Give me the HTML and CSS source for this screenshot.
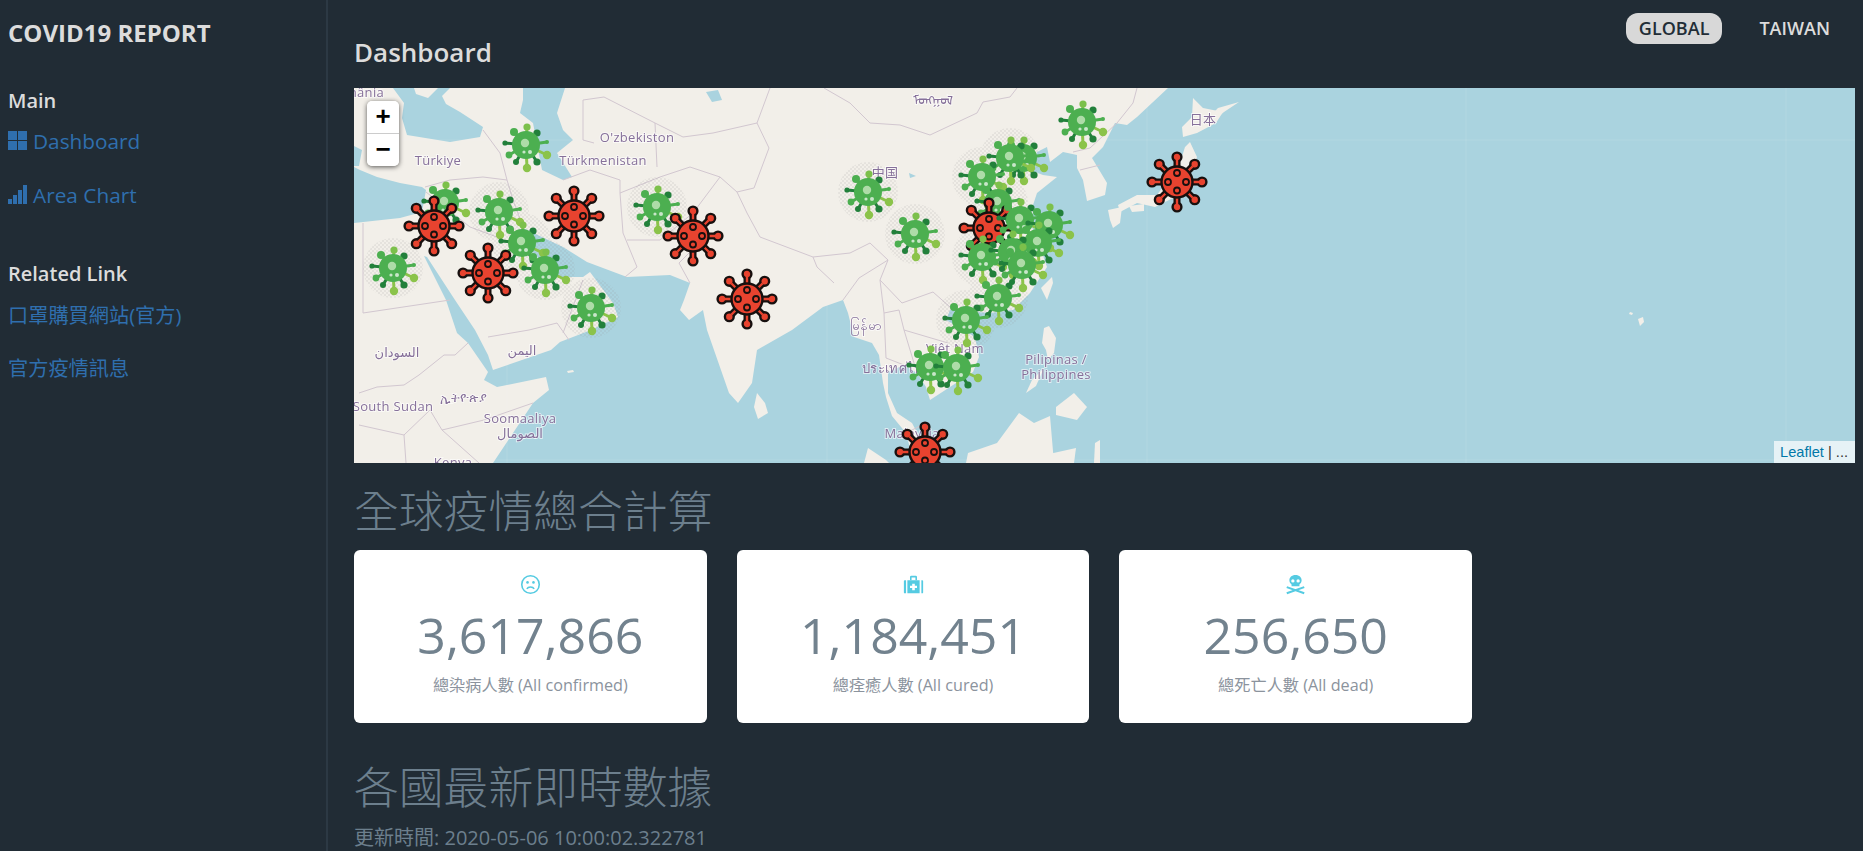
FILE: index.html
```html
<!DOCTYPE html>
<html>

<head>
    <meta charset="UTF-8">
    <title>COVID19 REPORT</title>
    <link rel="stylesheet" href="styles.css">
</head>

<body>
    <aside class="sidebar">
        <h1 class="brand">COVID19 REPORT</h1>
        <h2 class="side-title side-main">Main</h2>
        <a class="side-link side-link-icon" href="#">
            <svg class="side-icon" viewBox="0 0 19 19"><path d="M0 0h9v9H0zM10 0h9v9h-9zM0 10h9v9H0zM10 10h9v9h-9z"/></svg>
            Dashboard
        </a>
        <a class="side-link side-link-icon" href="#">
            <svg class="side-icon" viewBox="0 0 19 19"><path d="M0 14h4v5H0zM5 10h4v9H5zM10 5h4v14h-4zM15 0h4v19h-4z"/></svg>
            Area Chart
        </a>
        <h2 class="side-title side-related">Related Link</h2>
        <a class="side-link" href="#">口罩購買網站(官方)</a>
        <a class="side-link side-link-last" href="#">官方疫情訊息</a>
    </aside>

    <main class="content">
        <div class="topbar">
            <h2 class="page-title">Dashboard</h2>
            <div class="tabs">
                <a class="tab tab-active" href="#">GLOBAL</a>
                <a class="tab" href="#">TAIWAN</a>
            </div>
        </div>

        <div class="map">
            <svg class="map-svg" viewBox="0 0 1501 375">
                <defs>
                    <pattern id="dither" width="4" height="4" patternUnits="userSpaceOnUse">
                        <path d="M0 0h2v2H0zM2 2h2v2H2z" fill="#9a9a9a"/>
                    </pattern>
                    <g id="virus-green">
                        <g stroke-width="3">
                            <path d="M0 0L1-18" stroke="#7cc04b"/>
                            <path d="M0 0L11-12" stroke="#22803b"/>
                            <path d="M0 0L21-3" stroke="#4caf50"/>
                            <path d="M0 0L21 10" stroke="#8bc34a"/>
                            <path d="M0 0L1 23" stroke="#8bc34a"/>
                            <path d="M0 0L11 17" stroke="#22803b"/>
                            <path d="M0 0L-10 17" stroke="#22803b"/>
                            <path d="M0 0L-17 10" stroke="#4caf50"/>
                            <path d="M0 0L-21-2" stroke="#22803b"/>
                            <path d="M0 0L-12-13" stroke="#4caf50"/>
                        </g>
                        <circle cx="1" cy="-18" r="3.6" fill="#7cc04b"/>
                        <circle cx="11" cy="-12" r="3.6" fill="#22803b"/>
                        <circle cx="21" cy="-3" r="2" fill="#4caf50"/>
                        <circle cx="21" cy="10" r="4.2" fill="#8bc34a"/>
                        <circle cx="1" cy="23" r="4.2" fill="#8bc34a"/>
                        <circle cx="11" cy="17" r="3.6" fill="#22803b"/>
                        <circle cx="-10" cy="17" r="3" fill="#22803b"/>
                        <circle cx="-17" cy="10" r="3.4" fill="#4caf50"/>
                        <circle cx="-21" cy="-2" r="2.6" fill="#22803b"/>
                        <circle cx="-12" cy="-13" r="4" fill="#4caf50"/>
                        <circle r="14" fill="#4caf50"/>
                        <circle cx="-1" cy="-2" r="4.2" fill="#aedca8"/>
                        <circle cx="4" cy="7" r="2" fill="#c8e6c9"/>
                        <circle cx="-2" cy="7" r="1.6" fill="#c8e6c9"/>
                    </g>
                    <g id="virus-red">
                        <path d="M0-25V25M-25 0H25M-17.7-17.7L17.7 17.7M-17.7 17.7L17.7-17.7" stroke="#17100f" stroke-width="7"/>
                        <g fill="#e8432f" stroke="#17100f" stroke-width="2.4">
                            <circle cy="-25" r="4.4"/>
                            <circle cy="25" r="4.4"/>
                            <circle cx="-25" r="4.4"/>
                            <circle cx="25" r="4.4"/>
                            <circle cx="-17.7" cy="-17.7" r="4.4"/>
                            <circle cx="17.7" cy="-17.7" r="4.4"/>
                            <circle cx="-17.7" cy="17.7" r="4.4"/>
                            <circle cx="17.7" cy="17.7" r="4.4"/>
                        </g>
                        <path d="M0-22V22M-22 0H22M-15.5-15.5L15.5 15.5M-15.5 15.5L15.5-15.5" stroke="#e8432f" stroke-width="2.4"/>
                        <circle r="15.5" fill="#e8432f" stroke="#17100f" stroke-width="2.4"/>
                        <g fill="none" stroke="#17100f" stroke-width="1.8">
                            <circle cy="-9" r="3"/>
                            <circle cy="8.5" r="3"/>
                            <circle cx="-9" r="3"/>
                            <circle cx="9" r="3"/>
                        </g>
                    </g>
                </defs>

                <g class="tiles">
                    <rect width="1501" height="375" fill="#aad3df"/>
                    <!-- land -->
                    <g fill="#f2efe9">
                        <path d="M0 0L814 0L783 29L773 37L761 35L749 59L738 70L753 95L751 107L733 113L729 92L723 80L723 67L709 64L696 74L693 59L683 64L676 82L689 87L703 89L683 105L679 117L678 139L686 159L693 179L676 205L659 222L636 225L596 222L592 232L621 249L625 269L619 284L576 312L572 299L563 285L550 277L534 284L534 305L543 325L558 335L567 352L578 375L560 375L552 345L538 328L532 309L529 295L525 267L518 255L500 249L494 225L489 212L469 219L438 242L403 262L398 295L384 315L375 305L353 242L349 222L335 232L326 222L330 212L336 195L316 187L273 189L233 174L209 159L169 140L173 159L203 189L229 189L236 184L259 215L264 229L237 242L206 254L197 262L139 282L134 267L121 242L101 212L73 169L70 168L92 212L103 245L114 255L134 284L130 292L143 299L192 289L195 302L179 315L139 375L0 375L0 135L46 130L68 124L72 102L68 99L46 95L23 89L6 82L0 79Z"/>
                        <path d="M510 375L514 360L532 372L535 375Z"/>
                        <path d="M839 10L849 20L869 24L862 35L843 45L829 49L828 39L838 29Z"/>
                        <path d="M836 54L843 69L829 105L801 119L783 115L766 124L764 117L783 107L803 107L826 75L831 59Z"/>
                        <path d="M754 122L768 119L766 135L759 140L756 132Z"/>
                        <path d="M775 118L790 116L790 123L778 124Z"/>
                        <path d="M698 189L699 195L693 212L687 200Z"/>
                        <path d="M600 228L610 226L610 236L602 238Z"/>
                        <path d="M403 305L411 315L414 325L404 331L400 319Z"/>
                        <path d="M690 240L695 238L702 250L700 265L694 272L692 262L688 255Z"/>
                        <path d="M702 319L720 305L733 319L723 332L702 327Z"/>
                        <path d="M678 292L690 280L682 298L672 305Z"/>
                        <path d="M612 375L614 365L643 355L665 325L680 335L696 328L700 375Z"/>
                        <path d="M686 368L722 360L720 375L686 375Z"/>
                        <path d="M741 355L746 352L746 375L740 375Z"/>
                        <path d="M1284 231L1289 229L1290 234L1286 238Z"/>
                        <path d="M1276 224l3 1-1 2-3-1z"/>
                        <path d="M213 283l6-1 1 2-6 1z"/>
                        <path d="M852 32L864 20L885 14L870 24L858 34Z"/>
                    </g>
                    <!-- inland and enclosed seas -->
                    <g fill="#aad3df">
                        <path d="M169 0L169 12L166 25L179 35L188 82L209 92L218 89L203 65L219 52L209 42L203 25L211 0Z"/>
                        <path d="M39 0L50 15L48 30L53 47L96 54L126 49L129 39L106 24L92 16L88 8L96 0L84 0L74 10L62 6L60 0Z"/>
                        <path d="M0 58L8 62L5 78L0 78Z"/>
                        <path d="M352 4L364 2L368 12L358 14Z"/>
                        <path d="M555 85L562 88L556 90Z"/>
                    </g>
                    <!-- tile seams -->
                    <path d="M153 0V375M473 0V375M793 0V375M1112 0V375M1432 0V375M0 52H1501M0 372H1501" stroke="#fff" stroke-opacity="0.1"/>
                    <!-- borders -->
                    <g fill="none" stroke="#d2c7d0" stroke-width="1">
                        <path d="M71 99L96 92L129 89L153 92L146 65L129 42"/>
                        <path d="M153 92L159 112L169 139"/>
                        <path d="M209 92L236 82L266 92L266 105L269 145L283 179L271 189"/>
                        <path d="M266 105L306 89L336 79L366 89L383 104L393 125L406 149L459 169L463 179L480 195"/>
                        <path d="M366 89L339 125L306 152L273 152"/>
                        <path d="M339 125L340 160L325 175L336 195"/>
                        <path d="M229 12L229 52L240 55"/>
                        <path d="M229 12L250 9L301 35L303 79"/>
                        <path d="M301 35L329 49L359 45L403 35L416 0"/>
                        <path d="M403 35L415 60L400 100L383 104"/>
                        <path d="M9 135L9 225L96 212"/>
                        <path d="M72 104L116 139L159 155"/>
                        <path d="M229 192L209 245"/>
                        <path d="M134 249L175 242L203 235L215 252"/>
                        <path d="M5 305L23 299L50 297L65 287L90 267L101 267L114 255"/>
                        <path d="M5 337L50 347L76 322L88 342L130 332L179 315"/>
                        <path d="M52 375L50 347M88 342L125 375"/>
                        <path d="M496 15L516 35L546 37L576 47L623 25L629 14L656 9L663 0"/>
                        <path d="M496 15L470 0"/>
                        <path d="M783 0L779 15L763 35L736 60L719 64"/>
                        <path d="M726 82L746 77"/>
                        <path d="M459 169L496 165L516 155L534 172L526 192L548 215L579 204L596 219"/>
                        <path d="M534 172L505 190L489 212"/>
                        <path d="M526 192L530 225L545 222L550 242L594 255"/>
                        <path d="M530 225L532 270L550 277"/>
                        <path d="M550 242L563 285"/>
                        <path d="M552 345L566 338"/>
                    </g>
                    <!-- faint hatching the marker images leave around them -->
                    <g fill="url(#dither)" opacity="0.14">
                        <circle cx="145" cy="124" r="30"/>
                        <circle cx="168" cy="155" r="30"/>
                        <circle cx="191" cy="182" r="30"/>
                        <circle cx="39" cy="180" r="30"/>
                        <circle cx="237" cy="220" r="30"/>
                        <circle cx="303" cy="119" r="30"/>
                        <circle cx="514" cy="104" r="30"/>
                        <circle cx="561" cy="146" r="30"/>
                        <circle cx="656" cy="70" r="30"/>
                        <circle cx="628" cy="89" r="30"/>
                        <circle cx="644" cy="115" r="30"/>
                        <circle cx="628" cy="169" r="30"/>
                        <circle cx="644" cy="210" r="30"/>
                        <circle cx="612" cy="232" r="30"/>
                    </g>
                    <!-- labels -->
                    <g class="labels">
                        <text class="label-end" x="30" y="9">mânia</text>
                        <text x="84" y="77">Türkiye</text>
                        <text x="283" y="54">O'zbekiston</text>
                        <text x="249" y="77">Türkmenistan</text>
                        <text x="531" y="89">中国</text>
                        <text x="849" y="36">日本</text>
                        <text x="579" y="17">ᠮᠣᠩᠭᠣᠯ</text>
                        <text x="43" y="269">السودان</text>
                        <text x="168" y="267">اليمن</text>
                        <text x="110" y="314">ኢትዮጵያ</text>
                        <text x="39" y="323">South Sudan</text>
                        <text x="166" y="335">Soomaaliya</text>
                        <text x="166" y="350">الصومال</text>
                        <text x="99" y="379">Kenya</text>
                        <text x="512" y="242">မြန်မာ</text>
                        <text x="543" y="285">ประเทศไทย</text>
                        <text x="601" y="265">Việt Nam</text>
                        <text x="702" y="276">Pilipinas /</text>
                        <text x="702" y="291">Philippines</text>
                        <text x="558" y="350">Malaysia</text>
                    </g>
                </g>

                <!-- markers, coordinates are map pixels -->
                <use href="#virus-green" x="91" y="115"/>
                <use href="#virus-green" x="172" y="57"/>
                <use href="#virus-green" x="145" y="124"/>
                <use href="#virus-green" x="168" y="155"/>
                <use href="#virus-green" x="191" y="182"/>
                <use href="#virus-green" x="39" y="180"/>
                <use href="#virus-green" x="237" y="220"/>
                <use href="#virus-green" x="303" y="119"/>
                <use href="#virus-red" x="80" y="138"/>
                <use href="#virus-red" x="134" y="185"/>
                <use href="#virus-red" x="220" y="128"/>
                <use href="#virus-red" x="339" y="148"/>
                <use href="#virus-red" x="393" y="211"/>
                <use href="#virus-green" x="514" y="104"/>
                <use href="#virus-green" x="561" y="146"/>
                <use href="#virus-green" x="728" y="34"/>
                <use href="#virus-green" x="669" y="70"/>
                <use href="#virus-green" x="656" y="70"/>
                <use href="#virus-green" x="628" y="89"/>
                <use href="#virus-green" x="644" y="115"/>
                <use href="#virus-red" x="635" y="140"/>
                <use href="#virus-green" x="666" y="132"/>
                <use href="#virus-green" x="695" y="137"/>
                <use href="#virus-green" x="684" y="155"/>
                <use href="#virus-green" x="628" y="169"/>
                <use href="#virus-green" x="658" y="164"/>
                <use href="#virus-green" x="668" y="177"/>
                <use href="#virus-green" x="644" y="210"/>
                <use href="#virus-green" x="612" y="232"/>
                <use href="#virus-green" x="576" y="279"/>
                <use href="#virus-green" x="603" y="280"/>
                <use href="#virus-red" x="823" y="94"/>
                <use href="#virus-red" x="571" y="364"/>
            </svg>
            <div class="zoom-control">
                <a class="zoom-btn" href="#">+</a>
                <a class="zoom-btn" href="#">&#x2212;</a>
            </div>
            <div class="attribution"><a href="#">Leaflet</a> | ...</div>
        </div>

        <h2 class="section-title">全球疫情總合計算</h2>
        <div class="cards">
            <div class="card">
                <svg class="card-icon" viewBox="0 0 24 24"><circle cx="12" cy="12" r="10" fill="none" stroke="#55cbe2" stroke-width="1.8"/><circle cx="8.6" cy="9.6" r="1.5" fill="#55cbe2"/><circle cx="15.4" cy="9.6" r="1.5" fill="#55cbe2"/><path d="M7.8 17c1.600-3 6.800-3 8.400 0" fill="none" stroke="#55cbe2" stroke-width="1.7"/></svg>
                <div class="card-number">3,617,866</div>
                <div class="card-label">總染病人數 (All confirmed)</div>
            </div>
            <div class="card">
                <svg class="card-icon" viewBox="0 0 24 24"><path d="M8 7V3.500A1.500 1.500 0 0 1 9.500 2h5A1.500 1.500 0 0 1 16 3.500V7h-1.800V4h-4.400v3z" fill="#55cbe2"/><path d="M2 7h1.500v15H2a1 1 0 0 1-1-1V8a1 1 0 0 1 1-1zM21 7h1a1 1 0 0 1 1 1v13a1 1 0 0 1-1 1h-1zM5 7h14v15H5zM10.500 11v2.500H8v2.500h2.500v2.500h3V16H16v-2.500h-2.500V11z" fill="#55cbe2" fill-rule="evenodd"/></svg>
                <div class="card-number">1,184,451</div>
                <div class="card-label">總痊癒人數 (All cured)</div>
            </div>
            <div class="card">
                <svg class="card-icon" viewBox="0 0 24 24"><path d="M12 1C7.600 1 5 3.800 5 7.200c0 2.200 1 3.700 2.500 4.700V14h9v-2.100c1.500-1 2.500-2.500 2.500-4.700C19 3.800 16.400 1 12 1zM9 9.800a1.900 1.900 0 1 1 0-3.800 1.900 1.900 0 0 1 0 3.800zm6 0a1.900 1.900 0 1 1 0-3.800 1.900 1.900 0 0 1 0 3.800z" fill="#55cbe2" fill-rule="evenodd"/><path d="M2 15l20 7M22 15L2 22" stroke="#55cbe2" stroke-width="2.400"/></svg>
                <div class="card-number">256,650</div>
                <div class="card-label">總死亡人數 (All dead)</div>
            </div>
        </div>

        <h2 class="section-title section-latest">各國最新即時數據</h2>
        <p class="updated">更新時間: 2020-05-06 10:00:02.322781</p>
    </main>
</body>

</html>
```

FILE: styles.css
```css
html,
body {
    height: 851px;
    overflow: hidden;
}

body {
    margin: 0;
    display: flex;
    background-color: #212c35;
    font-family: "Open Sans", "Noto Sans CJK TC", sans-serif;
    color: #dcdcdc;
}

a {
    text-decoration: none;
}

/* Sidebar */
.sidebar {
    width: 318px;
    flex-shrink: 0;
    padding-left: 8px;
    border-right: 2px solid #2c3944;
    display: flex;
    flex-direction: column;
    align-items: flex-start;
}

.brand {
    margin: 16px 0 0;
    font-size: 24px;
    line-height: 33px;
    font-weight: 700;
    color: #dcdcdc;
}

.side-title {
    margin: 0;
    font-size: 20px;
    line-height: 27px;
    font-weight: 600;
    color: #dcdcdc;
}

.side-main {
    margin-top: 38px;
}

.side-related {
    margin-top: 38px;
    margin-bottom: 1px;
}

.side-link {
    display: flex;
    align-items: center;
    gap: 6px;
    height: 27px;
    margin-top: 13px;
    margin-bottom: 14px;
    font-size: 20.2px;
    color: #2f6fae;
}

.side-link-icon {
    font-size: 20.8px;
}

.side-link-last {
    margin-top: 12px;
}

.side-icon {
    width: 19px;
    height: 19px;
    fill: #2f6fae;
}

/* Main content */
.content {
    flex: 1;
    min-width: 0;
    padding: 0 8px 0 26px;
}

.topbar {
    height: 88px;
    display: flex;
    justify-content: space-between;
}

.page-title {
    align-self: flex-end;
    margin: 0 0 18px;
    font-size: 26px;
    line-height: 35px;
    font-weight: 600;
    color: #dcdcdc;
}

.tabs {
    display: flex;
    align-items: flex-start;
    gap: 24px;
    padding-top: 13px;
    padding-right: 12px;
}

.tab {
    padding: 0 13px;
    border-radius: 12px;
    font-size: 18px;
    line-height: 31px;
    font-weight: 600;
    color: #dcdcdc;
}

.tab-active {
    background-color: #d8d8d8;
    color: #222d36;
}

/* Map */
.map {
    position: relative;
    height: 375px;
    overflow: hidden;
    background-color: #aad3df;
}

.map-svg {
    display: block;
    width: 100%;
    height: 375px;
}

.tiles {
    filter: blur(0.45px);
}

.labels text {
    font-family: "Open Sans", "Noto Sans CJK TC", "DejaVu Sans", sans-serif;
    font-size: 13px;
    letter-spacing: 0.3px;
    text-anchor: middle;
    fill: #86709a;
    stroke: #fff;
    stroke-width: 2px;
    stroke-opacity: 0.6;
    paint-order: stroke;
}

.labels .label-end {
    text-anchor: end;
}

.zoom-control {
    position: absolute;
    top: 13px;
    left: 13px;
    width: 32px;
    border-radius: 5px;
    overflow: hidden;
    box-shadow: 0 1px 5px rgba(0, 0, 0, 0.65);
}

.zoom-btn {
    display: block;
    height: 32px;
    background-color: #fff;
    font-family: "Liberation Sans", sans-serif;
    font-size: 26px;
    font-weight: 700;
    line-height: 30px;
    text-align: center;
    color: #000;
}

.zoom-btn:first-child {
    border-bottom: 1px solid #ccc;
}

.attribution {
    position: absolute;
    right: 0;
    bottom: 0;
    padding: 0 7px 0 6px;
    height: 22px;
    background-color: rgba(255, 255, 255, 0.7);
    font-family: "Liberation Sans", sans-serif;
    font-size: 14.6px;
    line-height: 22px;
    color: #333;
}

.attribution a {
    color: #0078a8;
}

/* Stat cards */
.section-title {
    margin: 18px 0 9px;
    font-size: 44.8px;
    line-height: 60px;
    font-weight: 300;
    color: #6c7f8d;
}

.cards {
    display: flex;
    gap: 30px;
}

.card {
    width: 352.7px;
    height: 173px;
    box-sizing: border-box;
    padding-top: 24px;
    border-radius: 6px;
    background-color: #fff;
    text-align: center;
}

.card-icon {
    display: block;
    width: 21px;
    height: 21px;
    margin: 0 auto;
}

.card-number {
    margin-top: 6px;
    font-size: 50px;
    line-height: 68px;
    color: #72828e;
}

.card-label {
    margin-top: 5px;
    font-size: 16.2px;
    line-height: 22px;
    color: #8b939d;
}

.section-latest {
    margin: 34px 0 0;
}

.updated {
    margin: 7px 0 0;
    font-size: 20px;
    line-height: 27px;
    color: #6c7f8d;
}
```
